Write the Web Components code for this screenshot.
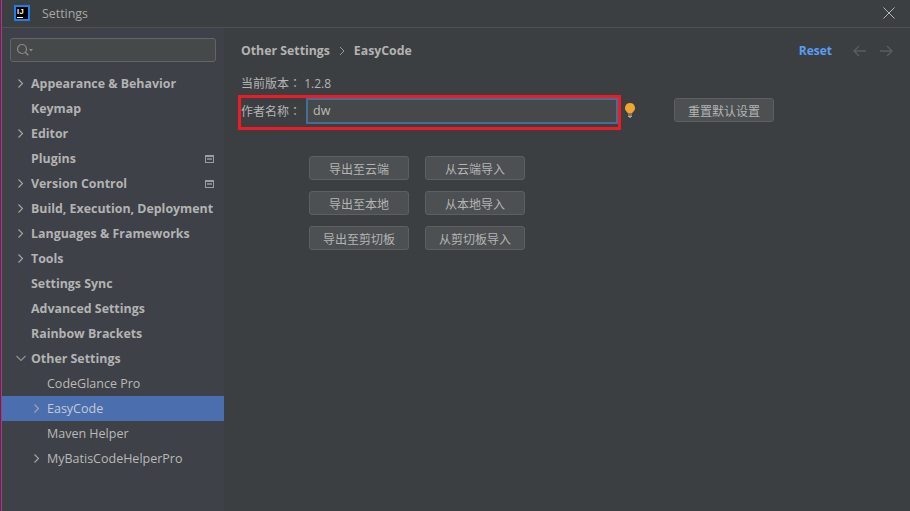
<!DOCTYPE html>
<html><head><meta charset="utf-8"><style>
html,body{margin:0;padding:0;height:100%;background:#3c3f41;overflow:hidden}
body{font:13px "Open Sans","Noto Sans CJK SC",sans-serif;color:#bbbbbb}
</style></head><body>
<ide-window>
<ide-titlebar></ide-titlebar>
<settings-sidebar>
<tree-row arrow="right" bold>Appearance &amp; Behavior</tree-row>
<tree-row bold>Keymap</tree-row>
<tree-row arrow="right" bold>Editor</tree-row>
<tree-row bold badge>Plugins</tree-row>
<tree-row arrow="right" bold badge>Version Control</tree-row>
<tree-row arrow="right" bold>Build, Execution, Deployment</tree-row>
<tree-row arrow="right" bold>Languages &amp; Frameworks</tree-row>
<tree-row arrow="right" bold>Tools</tree-row>
<tree-row bold>Settings Sync</tree-row>
<tree-row bold>Advanced Settings</tree-row>
<tree-row bold>Rainbow Brackets</tree-row>
<tree-row arrow="down" bold>Other Settings</tree-row>
<tree-row level="1">CodeGlance Pro</tree-row>
<tree-row level="1" arrow="right" selected>EasyCode</tree-row>
<tree-row level="1">Maven Helper</tree-row>
<tree-row level="1" arrow="right">MyBatisCodeHelperPro</tree-row>
</settings-sidebar>
<settings-panel></settings-panel>
</ide-window>
<script>
const CJK='"Open Sans","Noto Sans CJK SC",sans-serif';
const COLON='<span style="font-family:\'Noto Sans CJK TC\',sans-serif">：</span>';
class IdeWindow extends HTMLElement{constructor(){super();this.attachShadow({mode:'open'}).innerHTML=`<style>
:host{display:grid;grid-template-columns:222px 1fr;grid-template-rows:28px 1fr;width:910px;height:511px;box-sizing:border-box;padding-left:2px;background:linear-gradient(90deg,#3c3f41 1px,#c2288f 1px,#c2288f 2px,#3c3f41 2px)}
::slotted(ide-titlebar){grid-column:1/3}
</style><slot></slot>`}}
class IdeTitlebar extends HTMLElement{constructor(){super();this.attachShadow({mode:'open'}).innerHTML=`<style>
:host{display:flex;align-items:center;box-sizing:border-box;height:28px;border-bottom:1px solid #515151;padding:0 15px 1px 12px;background:#3c3f41;color:#a8a8a8;font-size:12.4px}
.logo{width:16px;height:16px;box-sizing:border-box;background:#000;border:2px solid #1e7fe8;display:flex;flex-direction:column;padding:1px 1px;margin-right:12px;flex:none}
.ij{font:bold 7.5px/7px "Liberation Sans",sans-serif;color:#fff;letter-spacing:.4px}
.bar{width:6px;height:1px;background:#fff;margin-top:2px}
.t{flex:1}
svg{display:block}
</style><span class="logo"><span class="ij">IJ</span><span class="bar"></span></span><span class="t">Settings</span>
<svg width="12" height="12" viewBox="0 0 12 12"><path d="M.5.5l11 11M11.5.5l-11 11" stroke="#b4b4b4" fill="none"/></svg>`}}
class SettingsSidebar extends HTMLElement{constructor(){super();this.attachShadow({mode:'open'}).innerHTML=`<style>
:host{display:block;background:#3e4147;padding:10px 0 0}
.search{height:24px;box-sizing:border-box;margin:0 8px 9px;border:1px solid #646464;border-radius:3px;background:#45494a;display:flex;align-items:center;padding-left:5px}
</style><div class="search"><svg width="20" height="14" viewBox="0 0 20 14"><circle cx="6" cy="6" r="4.5" fill="none" stroke="#8c8c8c" stroke-width="1.2"/><path d="M9.3 9.3l3 3" stroke="#8c8c8c" stroke-width="1.3"/><path d="M13 6h4l-2 2.500z" fill="#8c8c8c"/></svg></div><slot></slot>`}}
class TreeRow extends HTMLElement{constructor(){super();const a=this.getAttribute('arrow'),lv=+this.getAttribute('level')||0;
const d=a==='right'?'M2.5 1.5l4 4-4 4':a==='down'?'M.5 3l4.500 4.500L9.500 3':'';
this.attachShadow({mode:'open'}).innerHTML=`<style>
:host{display:flex;align-items:center;height:25px;box-sizing:border-box;padding-left:${14+lv*16}px;padding-right:10px;font-family:${CJK};font-size:12.5px;color:#b9b9b9;white-space:nowrap}
:host([bold]){font-size:12.4px;font-weight:700;color:#b3b3b3}
:host([selected]){background:#4b6eaf;color:#c5cbd3}
.a{width:15px;height:11px;flex:none;display:block}
.l{flex:1}
.b{width:9px;height:8px;border:1px solid #9a9da1;border-top-width:2px;box-sizing:border-box;display:block}
.b::after{content:"";display:block;margin:1px;height:2px;background:#7f8388}
</style><svg class="a" viewBox="0 0 15 11">${d?`<path d="${d}" fill="none" stroke="${a==='down'?'#909396':'#a4a6a9'}" stroke-width="1.1"/>`:''}</svg><span class="l"><slot></slot></span>${this.hasAttribute('badge')?'<span class="b"></span>':''}`}}
class IdeButton extends HTMLElement{constructor(){super();this.attachShadow({mode:'open'}).innerHTML=`<style>
:host{display:flex;align-items:center;justify-content:center;width:100px;height:24px;box-sizing:border-box;border:1px solid #5e6060;border-radius:3px;background:#4c5052;color:#b4b4b4;font:12px ${CJK};padding-top:1px}
</style><slot></slot>`}}
class SettingsPanel extends HTMLElement{constructor(){super();this.attachShadow({mode:'open'}).innerHTML=`<style>
:host{display:block;padding:0 0 0 14px;font:12px ${CJK};color:#b4b4b4}
.head{display:flex;align-items:center;height:25px;margin-top:10px;padding:0 17px 0 3px;font-weight:700;color:#b3b3b3;font-size:12.3px}
.sep{margin:0 9px 0 9px;display:block}
.sp{flex:1}
.reset{color:#589df6;margin-right:21px;font-size:12px}
.nav{display:flex;gap:14px}
.ver{margin:10px 0 0 3px;line-height:20px;height:20px}
.row{display:flex;align-items:center;margin-top:2px}
.red{display:flex;align-items:center;width:383px;height:35px;box-sizing:border-box;border:3px solid #ed1c24;padding:0 0 3px 0}
.lab{width:65px;flex:none;white-space:nowrap;padding-bottom:1px}
.inp{flex:1;height:26px;box-sizing:border-box;border:2px solid #466d94;background:#45494a;display:flex;align-items:center;padding:0 0 2px 5px;color:#bbb;font-size:12.5px;letter-spacing:.2px}
.bulb{margin:-4px 0 0 4px;display:block;flex:none}
.row ide-button{margin:-5px 0 0 39px}
.grid{display:grid;grid-template-columns:100px 100px;gap:11px 16px;margin:26px 0 0 71px}
</style>
<div class="head"><span>Other Settings</span><svg class="sep" width="6" height="10" viewBox="0 0 6 10"><path d="M1 1l4 4-4 4" fill="none" stroke="#9a9a9a"/></svg><span>EasyCode</span><span class="sp"></span><span class="reset">Reset</span>
<span class="nav"><svg width="13" height="12" viewBox="0 0 13 12"><path d="M13 6H1M6 1L1 6l5 5" fill="none" stroke="#5a5d5f" stroke-width="1.4"/></svg><svg width="13" height="12" viewBox="0 0 13 12"><path d="M0 6h12M7 1l5 5-5 5" fill="none" stroke="#5a5d5f" stroke-width="1.4"/></svg></span></div>
<div class="ver">当前版本${COLON} 1.2.8</div>
<div class="row"><div class="red"><span class="lab">作者名称${COLON}</span><div class="inp">dw</div></div>
<svg class="bulb" width="10" height="15" viewBox="0 0 10 15"><path d="M5 0a5 5 0 0 0-3 9c.5.4.8.8.9 1.500h4.200c.1-.7.4-1.100.9-1.500a5 5 0 0 0-3-9z" fill="#f2a52e"/><path d="M3 12h4M3 13.500h4" stroke="#aaa" stroke-width="1"/><path d="M4 14.500h2" stroke="#888" stroke-width="1"/></svg>
<ide-button>重置默认设置</ide-button></div>
<div class="grid"><ide-button>导出至云端</ide-button><ide-button>从云端导入</ide-button><ide-button>导出至本地</ide-button><ide-button>从本地导入</ide-button><ide-button>导出至剪切板</ide-button><ide-button>从剪切板导入</ide-button></div>`}}
customElements.define('ide-window',IdeWindow);
customElements.define('ide-titlebar',IdeTitlebar);
customElements.define('settings-sidebar',SettingsSidebar);
customElements.define('tree-row',TreeRow);
customElements.define('ide-button',IdeButton);
customElements.define('settings-panel',SettingsPanel);
</script></body></html>
